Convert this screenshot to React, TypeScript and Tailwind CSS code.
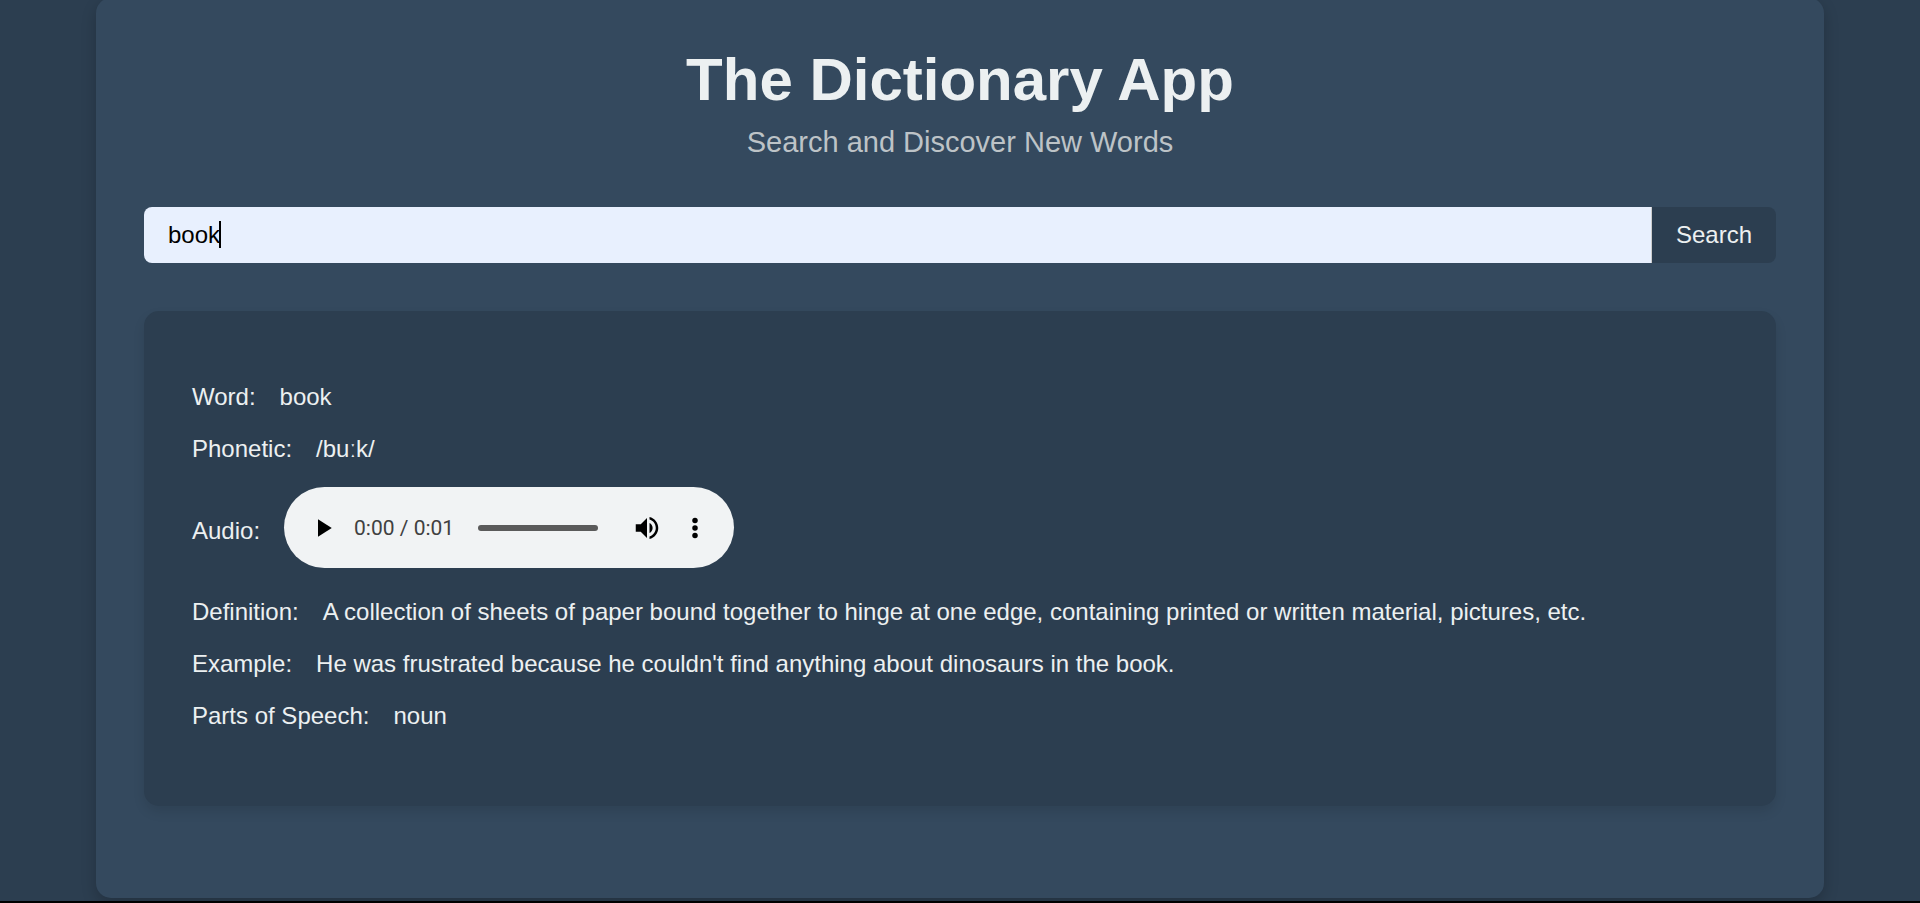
import type { ReactNode } from "react";

function Row({ label, children }: { label: string; children: ReactNode }) {
  return (
    <div className="flex items-center gap-6">
      <dt className="shrink-0">{label}</dt>
      <dd>{children}</dd>
    </div>
  );
}

function AudioPlayer() {
  return (
    <div className="mb-1.5 flex h-[81px] w-[450px] items-center rounded-full bg-[#f1f3f4] pr-6 pl-6 text-black">
      <button type="button" aria-label="Play" className="shrink-0">
        <svg viewBox="0 0 24 24" className="size-[30px]" fill="currentColor" aria-hidden="true">
          <path d="M8 5v14l11-7z" />
        </svg>
      </button>
      <span className="ml-4 shrink-0 font-[Roboto,sans-serif] text-[21px] leading-6 text-[#404040]">0:00 / 0:01</span>
      <div className="mx-6 h-1.5 w-[120px] rounded-full bg-[#5a5a5a]" />
      <button type="button" aria-label="Mute" className="ml-auto shrink-0">
        <svg viewBox="0 0 24 24" className="size-[30px]" fill="currentColor" aria-hidden="true">
          <path d="M3 9v6h4l5 5V4L7 9H3zm13.5 3c0-1.77-1.02-3.29-2.5-4.03v8.05c1.48-.73 2.5-2.25 2.5-4.02zM14 3.23v2.06c2.89.86 5 3.54 5 6.71s-2.11 5.85-5 6.71v2.06c4.01-.91 7-4.49 7-8.77s-2.99-7.86-7-8.77z" />
        </svg>
      </button>
      <button type="button" aria-label="More options" className="ml-[18px] shrink-0">
        <svg viewBox="0 0 24 24" className="size-[30px]" fill="currentColor" aria-hidden="true">
          <circle cx="12" cy="6" r="2.2" />
          <circle cx="12" cy="12" r="2.2" />
          <circle cx="12" cy="18" r="2.2" />
        </svg>
      </button>
    </div>
  );
}

export default function App() {
  return (
    <div className="min-h-screen overflow-hidden border-b-2 border-black bg-[#2c3e50] pb-[3px] font-['Liberation_Sans',Arial,sans-serif] text-2xl leading-7 text-[#ecf0f1]">
      <main className="mx-auto -mt-0.5 w-9/10 rounded-[15px] bg-[#34495e] px-12 pt-12 pb-[92px] shadow-[0_6px_15px_rgba(0,0,0,0.2)]">
        <header className="text-center">
          <h1 className="text-[60px] leading-[68px] font-bold">The Dictionary App</h1>
          <p className="mt-3 text-[29px] leading-[33px] text-[#bdc3c7]">Search and Discover New Words</p>
        </header>

        <form className="mt-12 flex h-14" onSubmit={(e) => e.preventDefault()}>
          <div className="relative flex-1">
            <input
              type="text"
              aria-label="Word"
              defaultValue="book"
              className="h-full w-full rounded-l-[8px] border-r border-[#cccccc] bg-[#e8f0fe] px-6 text-black caret-transparent outline-none"
            />
            <span className="absolute top-3.5 left-[75px] h-[27px] w-0.5 bg-black" aria-hidden="true" />
          </div>
          <button type="submit" className="rounded-r-[8px] bg-[#2c3e50] px-6">
            Search
          </button>
        </form>

        <section className="mt-12 rounded-[15px] bg-[#2c3e50] px-12 pt-[72px] pb-[76px] shadow-[0_6px_12px_rgba(0,0,0,0.1)]">
          <dl className="flex flex-col gap-6">
            <Row label="Word:">book</Row>
            <Row label="Phonetic:">/buːk/</Row>
            <Row label="Audio:">
              <AudioPlayer />
            </Row>
            <Row label="Definition:">
              A collection of sheets of paper bound together to hinge at one edge, containing printed or written
              material, pictures, etc.
            </Row>
            <Row label="Example:">He was frustrated because he couldn't find anything about dinosaurs in the book.</Row>
            <Row label="Parts of Speech:">noun</Row>
          </dl>
        </section>
      </main>
    </div>
  );
}
